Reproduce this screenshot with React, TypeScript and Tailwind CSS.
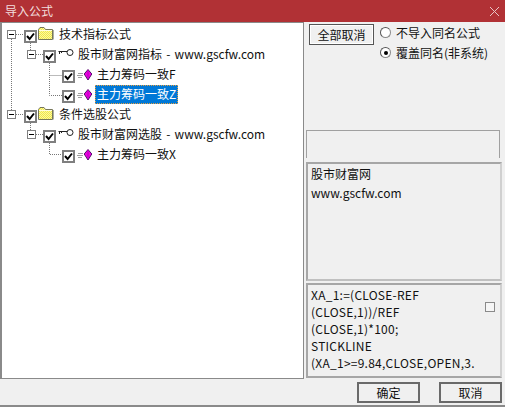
import React from "react";

const font = { fontFamily: '"Noto Sans CJK SC", "Liberation Sans", sans-serif' };

function Check() {
  return (
    <span className="mt-[4px] flex h-[13px] w-[13px] shrink-0 items-center justify-center border-2 border-[#7f7f7f] bg-white">
      <svg width="9" height="9" viewBox="0 0 9 9">
        <path d="M1 4 L3.6 7 L8 1.5" fill="none" stroke="#000" strokeWidth="2" />
      </svg>
    </span>
  );
}

function Folder() {
  return (
    <svg width="16" height="13" viewBox="0 0 16 13" className="mb-[2px] shrink-0">
      <defs>
        <pattern id="dither" width="2" height="2" patternUnits="userSpaceOnUse">
          <rect width="2" height="2" fill="#f7ef3a" />
          <rect width="1" height="1" fill="#f4f0b0" />
          <rect x="1" y="1" width="1" height="1" fill="#f4f0b0" />
        </pattern>
      </defs>
      <path d="M0.5 12.5 V2.5 L2 0.5 H6 L7.5 2.5 H14.5 V12.5 Z" fill="url(#dither)" stroke="#77775a" />
      <path d="M1 3.5 H14" stroke="#fffde0" />
      <path d="M15.5 3 V12.5" stroke="#b0b0a0" />
    </svg>
  );
}

function Key() {
  return (
    <svg width="16" height="10" viewBox="0 0 16 10" className="mb-[2px] shrink-0">
      <path d="M0.5 3.5 H9.5 M1.5 3.5 V6 M3.5 3.5 V5" stroke="#222" fill="none" />
      <circle cx="12" cy="4.5" r="3" fill="#fff" stroke="#222" />
    </svg>
  );
}

function Gem() {
  return (
    <svg width="16" height="12" viewBox="0 0 16 12" className="mt-[1px] shrink-0">
      <path d="M1 4.5 H6 M0 6.5 H6 M1 8.5 H5" stroke="#a0a0a0" />
      <path d="M11 0.5 L14.8 5 L11 11 L7.2 5 Z" fill="#f000e0" stroke="#50106a" />
      <path d="M11 1.5 V10" stroke="#b000c0" />
    </svg>
  );
}

function Row({
  pl,
  children,
  label,
  selected,
  wide,
}: {
  pl: string;
  children: React.ReactNode;
  label: string;
  selected?: boolean;
  wide?: boolean;
}) {
  return (
    <div className={`flex h-[20px] items-center ${pl}`}>
      {children}
      <span
        className={
          selected
            ? "ml-[2px] border border-dotted border-[#e8a040] bg-[#0078d7] px-[1px] leading-[17px] text-white"
            : wide
              ? "ml-[2px] border border-transparent px-[1px] leading-[17px] [word-spacing:1.5px]"
              : "ml-[2px] border border-transparent px-[1px] leading-[17px]"
        }
      >
        <span className="block -translate-y-px">{label}</span>
      </span>
    </div>
  );
}

function Lines() {
  return (
    <svg width="100" height="160" className="absolute left-0 top-0" fill="none" stroke="#777" strokeDasharray="1 1">
      <path d="M9.5 16 V88" />
      <path d="M14 11.5 H21" />
      <path d="M28.5 20 V27 M28.5 100 V107" />
      <path d="M34 31.5 H41 M34 111.5 H41" />
      <path d="M47.5 40 V72.5 H60 M47.5 52.5 H60" />
      <path d="M47.5 120 V131.5 H60" />
      <path d="M14 91.5 H21" />
    </svg>
  );
}

function Expander() {
  return (
    <span className="relative z-10 flex h-[9px] w-[9px] shrink-0 items-center justify-center border border-[#808080] bg-white">
      <span className="h-px w-[5px] bg-black" />
    </span>
  );
}

function Btn({ label }: { label: string }) {
  return (
    <div className="flex h-[21px] w-[63px] items-center justify-center border-2 border-[#6a6a6a] bg-[#f0f0f0]">{label}</div>
  );
}

export default function App() {
  return (
    <div className="flex h-[407px] w-[505px] flex-col overflow-hidden bg-[#f0f0f0] text-[12px] text-[#111]" style={font}>
      <div className="flex h-[22px] shrink-0 items-center justify-between bg-[#b13135] pl-[5px] pr-[5px] text-[#f2dede]">
        <span>导入公式</span>
        <svg width="11" height="11" viewBox="0 0 11 11">
          <path d="M1 1 L10 10 M10 1 L1 10" stroke="#e8c4c5" />
        </svg>
      </div>
      <div className="flex min-h-0 flex-1 border-l-2 border-[#8a8a8a]">
        <div className="relative w-[302px] shrink-0 border-b border-r border-t border-[#8a8a8a] bg-white pt-[1px]">
          <Lines />
          <div className="relative">
            <Row pl="pl-[5px]" label="技术指标公式">
              <Expander />
              <span className="ml-[8px] flex"><Check /></span>
              <span className="ml-[1px] mr-[1px] flex"><Folder /></span>
            </Row>
            <Row pl="pl-[25px]" label="股市财富网指标 - www.gscfw.com" wide>
              <Expander />
              <span className="ml-[7px] flex"><Check /></span>
              <span className="ml-[2px] flex"><Key /></span>
            </Row>
            <Row pl="pl-[60px]" label="主力筹码一致F">
              <Check />
              <span className="ml-[2px] flex"><Gem /></span>
            </Row>
            <Row pl="pl-[60px]" label="主力筹码一致Z" selected>
              <Check />
              <span className="ml-[2px] flex"><Gem /></span>
            </Row>
            <Row pl="pl-[5px]" label="条件选股公式">
              <Expander />
              <span className="ml-[8px] flex"><Check /></span>
              <span className="ml-[1px] mr-[1px] flex"><Folder /></span>
            </Row>
            <Row pl="pl-[25px]" label="股市财富网选股 - www.gscfw.com" wide>
              <Expander />
              <span className="ml-[7px] flex"><Check /></span>
              <span className="ml-[2px] flex"><Key /></span>
            </Row>
            <Row pl="pl-[60px]" label="主力筹码一致X">
              <Check />
              <span className="ml-[2px] flex"><Gem /></span>
            </Row>
          </div>
        </div>
        <div className="flex min-w-0 flex-1 flex-col pl-[2px] pr-[3px]">
          <div className="flex h-[108px] shrink-0 items-start pl-[3px] pt-[2px]">
            <div className="flex h-[21px] w-[65px] items-center justify-center border border-[#555] bg-[#f0f0f0] shadow-[inset_0_0_0_1px_#fff]">
              全部取消
            </div>
            <div className="ml-[6px] flex flex-col gap-[3px]">
              <label className="flex h-[17px] items-center">
                <span className="mr-[5px] h-[11px] w-[11px] rounded-full border border-[#8a8a8a] border-l-[#555] border-t-[#555] bg-white" />
                不导入同名公式
              </label>
              <label className="flex h-[17px] items-center">
                <span className="mr-[5px] flex h-[11px] w-[11px] items-center justify-center rounded-full border border-[#8a8a8a] border-l-[#555] border-t-[#555] bg-white">
                  <span className="h-[4px] w-[4px] rounded-full bg-black" />
                </span>
                覆盖同名(非系统)
              </label>
            </div>
          </div>
          <div className="mr-[2px] h-[28px] shrink-0 border-l border-r border-t border-[#a0a0a0]" />
          <div className="mt-[4px] h-[119px] shrink-0 border-2 border-[#a6a6a6] border-b-[#c0c0c0] border-r-[#d0d0d0] bg-[#f0f0f0] px-[3px] leading-[19px]">
            <div>股市财富网</div>
            <div>www.gscfw.com</div>
          </div>
          <div className="relative mt-[2px] h-[95px] shrink-0 border-2 border-[#a6a6a6] border-r-[#d0d0d0] px-[3px] pt-[1px] leading-[17px] tracking-[0.25px]">
            <div>XA_1:=(CLOSE-REF</div>
            <div>(CLOSE,1))/REF</div>
            <div>(CLOSE,1)*100;</div>
            <div>STICKLINE</div>
            <div>(XA_1&gt;=9.84,CLOSE,OPEN,3.</div>
            <span className="absolute right-[5px] top-[17px] h-[10px] w-[10px] border border-[#8a8a8a] bg-[#f6f6f6]" />
          </div>
        </div>
      </div>
      <div className="flex h-[28px] shrink-0 items-start justify-end gap-[19px] border-b-2 border-[#8a8a8a] pr-[3px] pt-[3px]">
        <Btn label="确定" />
        <Btn label="取消" />
      </div>
    </div>
  );
}
